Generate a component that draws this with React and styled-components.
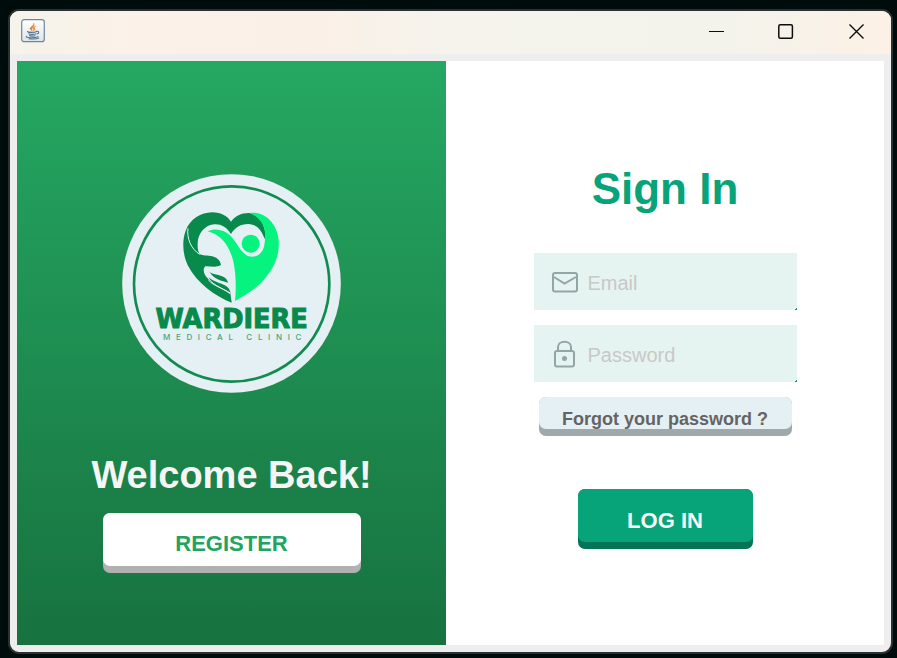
import React from "react";
import styled, { createGlobalStyle, css } from "styled-components";

const GlobalStyle = createGlobalStyle`
  *, *::before, *::after { box-sizing: border-box; }
  body {
    margin: 0;
    background: #000b0b;
    font-family: "Liberation Sans", Arial, sans-serif;
  }
  button, input { font-family: inherit; }
`;

const Desktop = styled.div`
  display: flex;
  min-height: 100vh;
  padding: 9px 4px 4px 8px;
`;

const Window = styled.div`
  flex: 1;
  display: flex;
  flex-direction: column;
  overflow: hidden;
  border: 2px solid #2b3131;
  border-radius: 11px;
  background: #eeeeee;
`;

const TitleBar = styled.header`
  display: flex;
  align-items: flex-start;
  justify-content: space-between;
  height: 43px;
  padding-left: 11px;
  background: linear-gradient(90deg, #f5f3ea 0%, #fbf1e8 14%, #fbf0e7 34%, #f5f3ec 50%, #f4f3eb 82%, #fbf1e6 97%);
`;

const AppIcon = styled.svg`
  display: block;
  width: 24px;
  height: 24px;
  margin-top: 8px;
`;

const WindowControls = styled.div`
  display: flex;
`;

const WindowButton = styled.button`
  display: grid;
  place-items: center;
  width: 70px;
  height: 41px;
  padding: 0;
  border: 0;
  background: transparent;

  svg {
    display: block;
    width: 17px;
    height: 17px;
    fill: none;
    stroke: #0a0d0b;
  }
`;

const Content = styled.main`
  flex: 1;
  display: grid;
  grid-template-columns: 429fr 438fr;
  padding: 7px;
`;

const Panel = styled.section`
  display: flex;
  flex-direction: column;
  align-items: center;
`;

const WelcomePanel = styled(Panel)`
  padding: 113px 16px 40px;
  background: linear-gradient(180deg, #25a862, #17723f);
`;

const SignInPanel = styled(Panel).attrs({ as: "form" })`
  padding: 102px 16px 40px;
  background: #ffffff;
`;

const Logo = styled.svg`
  display: block;
  width: 219px;
  height: 219px;
  margin-bottom: 60px;
`;

const Wordmark = styled.text`
  font-family: "DejaVu Sans", sans-serif;
  font-size: 77px;
  font-weight: 700;
  fill: #078a4b;
  stroke: #078a4b;
  stroke-width: 3px;
`;

const Tagline = styled.text`
  font-family: Inter, "Liberation Sans", sans-serif;
  font-size: 24px;
  font-weight: 500;
  letter-spacing: 17px;
  fill: #4aa67b;
`;

const WelcomeTitle = styled.h2`
  margin: 0 0 16px;
  font-size: 38px;
  line-height: 44px;
  color: #f5f5f5;
`;

const SignInTitle = styled.h1`
  margin: 0 0 38px;
  font-size: 44px;
  line-height: 52px;
  color: #07a479;
`;

const Fields = styled.div`
  display: grid;
  grid-template-columns: minmax(0, 1fr);
  gap: 15px;
  width: 100%;
  max-width: 263px;
  margin-bottom: 15px;
`;

const Field = styled.label`
  display: flex;
  align-items: center;
  height: 57px;
  padding: 2px 10px 0 16px;
  background: linear-gradient(135deg, #e6f4f1 calc(100% - 2px), #2f8f70 0);

  svg {
    flex: none;
    width: 29px;
    height: 29px;
    margin-right: 9px;
    fill: none;
    stroke: #93a6a6;
    stroke-width: 2;
  }
`;

const TextInput = styled.input`
  flex: 1;
  min-width: 0;
  padding: 0;
  border: 0;
  outline: 0;
  background: transparent;
  font-size: 20px;
  line-height: 24px;
  color: #555555;

  &::placeholder {
    color: #c8c8c8;
    opacity: 1;
  }
`;

const variants = {
  register: css`
    --face: #ffffff;
    --lip: #b1b1b1;
    max-width: 258px;
    height: 60px;
    padding-top: 2px;
    color: #22a45f;
  `,
  forgot: css`
    --face: #e4f0f3;
    --lip: #9fa8aa;
    max-width: 253px;
    height: 39px;
    margin-bottom: 53px;
    padding-top: 5px;
    font-size: 18px;
    color: #646464;
  `,
  login: css`
    --face: #07a479;
    --lip: #057355;
    max-width: 175px;
    height: 60px;
    padding-top: 3px;
    color: #f8fbfa;
  `,
};

const RaisedButton = styled.button`
  position: relative;
  isolation: isolate;
  width: 100%;
  padding: 0;
  border: 0;
  border-radius: 7px;
  background: var(--lip);
  font-size: 22px;
  font-weight: 700;
  ${({ $variant }) => variants[$variant]}

  &::before {
    content: "";
    position: absolute;
    inset: 0 0 7px;
    z-index: -1;
    border-radius: 7px;
    background: var(--face);
  }
`;

function JavaIcon() {
  return (
    <AppIcon viewBox="0 0 24 24" aria-hidden="true">
      <defs>
        <linearGradient id="tile" x1="0" y1="0" x2="0" y2="1">
          <stop offset="0" stopColor="#ffffff" />
          <stop offset="1" stopColor="#dfe3e8" />
        </linearGradient>
      </defs>
      <rect x="0.7" y="0.7" width="22.6" height="22" rx="2.5" fill="url(#tile)" stroke="#6d879b" strokeWidth="1.2" />
      <path d="M12.600 4.200C13.500 6.500 8.600 7.800 9 9.800C9.200 10.800 10.500 11.400 11.200 12.200C11 10.600 10.500 10 11.600 8.800C12.700 7.600 13.900 6 12.600 4.200Z M14.800 7.200C12.300 8 11.500 9.200 12.400 10.100C12.900 10.700 12.500 11.400 12 12C14 11.200 14.400 10.300 13.700 9.500C13.100 8.800 13.600 8.200 14.800 7.200Z" fill="#ee8430" stroke="#ee8430" strokeWidth="0.5" />
      <path d="M6.500 12.500C6.800 13.700 14 13.500 15 12.700M7.800 14.700C8.500 15.700 13.600 15.500 14.600 14.900M8.500 16.500C9.500 17.300 13 17.200 14.100 16.700M15.500 12.400C18.500 11.600 18.400 14.400 15.800 15M5.500 17.300C3.600 19 14 19.400 17 17.600M8 19.700C11.500 20.100 16 19.800 17.700 18.900" fill="none" stroke="#537592" strokeWidth="1.1" strokeLinecap="round" />
    </AppIcon>
  );
}

function ClinicLogo() {
  return (
    <Logo viewBox="21 27 657 657" role="img" aria-label="Wardiere Medical Clinic">
      <circle cx="349.500" cy="355.500" r="328" fill="#e4f0f3" />
      <circle cx="350" cy="357" r="293" fill="none" stroke="#128b51" strokeWidth="8" />
      <path
        fill="#078a4b"
        d="M350 413C300 393 246 354 219 302C202 268 201 226 212 197C226 161 258 143 291 142C319 142 338 154 348 170C360 152 381 143 404 144C431 151 450 176 451 208L449 223C440 194 425 178 400 177C375 177 359 189 348 207C335 187 319 177 299 178C269 180 249 205 248 235C247 248 249 259 254 268C270 274 282 270 298 276C309 280 317 289 318 300C304 309 286 303 271 304C263 311 265 325 276 338C294 355 330 367 346 384L350 413Z"
      />
      <path fill="none" stroke="#e4f0f3" strokeWidth="3" d="M219 190C215 219 227 251 254 268" />
      <path
        fill="#078a4b"
        d="M284 322C300 332 321 328 334 342L340 353C319 348 299 344 284 322ZM280 336C297 354 329 354 342 371L347 383C322 374 294 366 280 336Z"
      />
      <path fill="none" stroke="#e4f0f3" strokeWidth="3" d="M276 332C289 361 318 365 345 386M280 345C296 363 321 369 346 384" />
      <path
        fill="#07f37f"
        d="M403 144C450 137 487 177 491 225C495 279 472 318 437 355C416 375 389 391 360 408C364 371 363 326 355 289C344 246 321 209 278 199C302 188 327 195 344 210C364 228 374 260 397 272C419 282 441 268 447 245C451 230 450 215 450 202C448 178 432 154 403 144Z"
      />
      <circle cx="407" cy="236" r="27" fill="#07f37f" />
      <Wordmark x="350" y="489" textAnchor="middle">WARDIERE</Wordmark>
      <Tagline x="360" y="525" textAnchor="middle">MEDICAL CLINIC</Tagline>
    </Logo>
  );
}

function MailIcon() {
  return (
    <svg viewBox="0 0 29 29" aria-hidden="true">
      <rect x="3" y="5" width="24" height="18.500" rx="2" />
      <path d="M4 9L14.500 15.500L26 9" />
    </svg>
  );
}

function LockIcon() {
  return (
    <svg viewBox="0 0 29 29" aria-hidden="true">
      <rect x="5" y="11" width="19" height="15.500" rx="2" />
      <path d="M8 11V7C8 0 21 0 21 7V11" />
      <circle cx="14.500" cy="18.500" r="1.500" fill="#93a6a6" />
    </svg>
  );
}

export default function App() {
  return (
    <>
      <GlobalStyle />
      <Desktop>
        <Window>
          <TitleBar>
            <JavaIcon />
            <WindowControls>
              <WindowButton type="button" aria-label="Minimize">
                <svg viewBox="0 0 17 17"><path d="M1 8.500H16" /></svg>
              </WindowButton>
              <WindowButton type="button" aria-label="Maximize">
                <svg viewBox="0 0 17 17"><rect x="0.800" y="1.700" width="13.600" height="13.600" rx="1.500" strokeWidth="1.500" /></svg>
              </WindowButton>
              <WindowButton type="button" aria-label="Close">
                <svg viewBox="0 0 17 17"><path d="M1.500 1.500L15.500 15.500M15.500 1.500L1.500 15.500" strokeWidth="1.400" /></svg>
              </WindowButton>
            </WindowControls>
          </TitleBar>
          <Content>
            <WelcomePanel>
              <ClinicLogo />
              <WelcomeTitle>Welcome Back!</WelcomeTitle>
              <RaisedButton type="button" $variant="register">REGISTER</RaisedButton>
            </WelcomePanel>
            <SignInPanel onSubmit={(event) => event.preventDefault()}>
              <SignInTitle>Sign In</SignInTitle>
              <Fields>
                <Field>
                  <MailIcon />
                  <TextInput type="email" placeholder="Email" aria-label="Email" />
                </Field>
                <Field>
                  <LockIcon />
                  <TextInput type="password" placeholder="Password" aria-label="Password" />
                </Field>
              </Fields>
              <RaisedButton type="button" $variant="forgot">Forgot your password ?</RaisedButton>
              <RaisedButton type="submit" $variant="login">LOG IN</RaisedButton>
            </SignInPanel>
          </Content>
        </Window>
      </Desktop>
    </>
  );
}
